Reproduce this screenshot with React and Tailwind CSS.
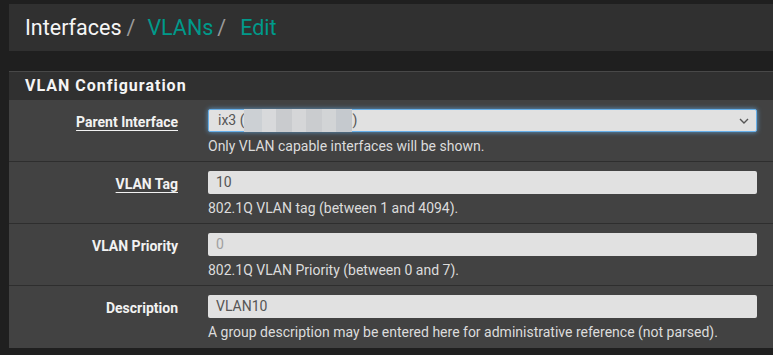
// @ts-nocheck
const FONT = { fontFamily: "Roboto, 'Liberation Sans', sans-serif" };

function Row({ label, underline, children, help, last }) {
  return (
    <div
      className={
        "flex h-[62px] pt-[9px] " + (last ? "" : "border-b border-[#2e2e2e]")
      }
    >
      <div className="w-[169px] shrink-0 pt-[3px] text-right text-[14px] font-bold text-[#f2f2f2]">
        <span className={underline ? "underline underline-offset-[3px]" : ""}>{label}</span>
      </div>
      <div className="ml-[30px] w-[549px]">
        {children}
        <div className="mt-[4px] text-[14px] text-[#dcdcdc]">{help}</div>
      </div>
    </div>
  );
}

function TextBox({ value, disabled }) {
  return (
    <div
      className={
        "flex h-[23px] items-center rounded-[2px] bg-[#e1e1e1] px-[8px] text-[14px] " +
        (disabled ? "text-[#a0a0a0]" : "text-[#555]")
      }
    >
      {value}
    </div>
  );
}

export default function App() {
  return (
    <div className="min-h-[355px] bg-[#1f1f1f] pl-[9px] pt-[4px]" style={FONT}>
      {/* ---------- BREADCRUMB ---------- */}
      <div className="flex h-[47px] items-center bg-[#303030] pl-[16px] pt-[2px] text-[21.5px]">
        <span className="text-[#f5f5f5]">Interfaces</span>
        <span className="ml-[5px] text-[#9a9a9a]">/</span>
        <span className="ml-[12px] text-[#00998a]">VLANs</span>
        <span className="ml-[4px] text-[#9a9a9a]">/</span>
        <span className="ml-[14px] text-[#00998a]">Edit</span>
      </div>

      {/* ---------- PANEL ---------- */}
      <div className="mt-[20px]">
        <div className="flex h-[29px] items-center border-t border-[#484848] bg-[#303030] pl-[16px] text-[16px] font-bold tracking-[1px] text-[#f5f5f5]">
          VLAN Configuration
        </div>
        <div className="bg-[#424242]">
          <Row label="Parent Interface" underline help="Only VLAN capable interfaces will be shown.">
            <div className="flex h-[23px] items-center rounded-[2px] border border-[#66afe9] bg-[#e1e1e1] pl-[9px] pr-[6px] text-[14px] text-[#555] shadow-[0_0_5px_rgba(102,175,233,0.8)]">
              <span>ix3 (</span>
              <span className="flex h-[23px] w-[108px]">
                <span className="h-full w-[18px] bg-[#ccd0d4]" />
                <span className="h-full w-[14px] bg-[#d8d9db]" />
                <span className="h-full w-[16px] bg-[#c9cbce]" />
                <span className="h-full w-[14px] bg-[#d5d6d8]" />
                <span className="h-full w-[16px] bg-[#cacccf]" />
                <span className="h-full w-[14px] bg-[#d2d4d6]" />
                <span className="h-full w-[16px] bg-[#c5c9ce]" />
              </span>
              <span>)</span>
              <svg className="ml-auto" width="12" height="8" viewBox="0 0 12 8">
                <path d="M2 2l4 4 4-4" fill="none" stroke="#555" strokeWidth="1.4" />
              </svg>
            </div>
          </Row>
          <Row label="VLAN Tag" underline help="802.1Q VLAN tag (between 1 and 4094).">
            <TextBox value="10" />
          </Row>
          <Row label="VLAN Priority" help="802.1Q VLAN Priority (between 0 and 7).">
            <TextBox value="0" disabled />
          </Row>
          <Row
            label="Description"
            last
            help="A group description may be entered here for administrative reference (not parsed)."
          >
            <TextBox value="VLAN10" />
          </Row>
        </div>
      </div>
    </div>
  );
}
